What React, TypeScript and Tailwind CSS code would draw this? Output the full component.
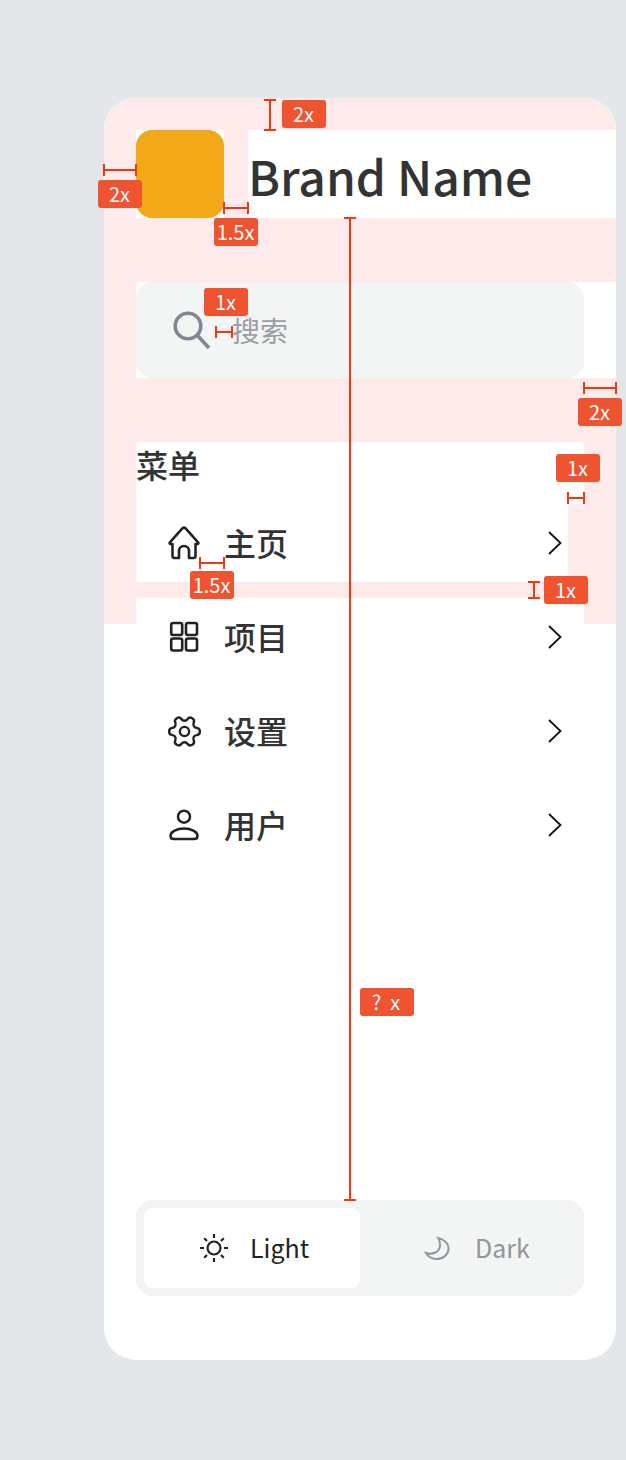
import type { ReactNode } from "react";
import { Settings } from "lucide-react";

const FONT = "font-['Noto_Sans_CJK_SC','Noto_Sans',sans-serif]";

function HomeIcon() {
  return (
    <svg width="32" height="34" viewBox="0 0 32 34" fill="none" stroke="#222" strokeWidth="2.6" strokeLinejoin="round">
      <path d="M11 32H6.500a2 2 0 0 1-2-2V18H2.600a1 1 0 0 1-.7-1.700L14.600 2.200a2 2 0 0 1 2.800 0l12.700 14.100a1 1 0 0 1-.7 1.700h-1.900v12a2 2 0 0 1-2 2H21v-7a5 5 0 0 0-10 0z" />
    </svg>
  );
}

function GridIcon() {
  return (
    <svg width="32" height="32" viewBox="0 0 32 32" fill="none" stroke="#222" strokeWidth="2.6">
      <rect x="3.200" y="2" width="11" height="12" rx="2" />
      <rect x="18" y="2" width="11" height="12" rx="2" />
      <rect x="3.200" y="17.500" width="11" height="12" rx="2" />
      <rect x="18" y="17.500" width="11" height="12" rx="2" />
    </svg>
  );
}

function UserIcon() {
  return (
    <svg width="32" height="32" viewBox="0 0 32 32" fill="none" stroke="#222" strokeWidth="2.5">
      <circle cx="16" cy="7.700" r="6" />
      <path d="M16 19.500c-7 0-13.500 3.200-13.500 7.200 0 2 1.300 3.300 3.300 3.300h20.400c2 0 3.300-1.300 3.300-3.300 0-4-6.500-7.200-13.500-7.200z" />
    </svg>
  );
}

function Chevron() {
  return (
    <svg width="14" height="24" viewBox="0 0 14 24" fill="none" stroke="#111" strokeWidth="1.8" className="shrink-0">
      <path d="M1 1l11.500 11L1 23" />
    </svg>
  );
}

function SearchIcon() {
  return (
    <svg width="40" height="40" viewBox="0 0 40 40" fill="none" stroke="#7f8791" strokeWidth="3.600">
      <circle cx="16" cy="16" r="12.800" />
      <path d="M25.500 25.500L37 38" />
    </svg>
  );
}

function SunIcon() {
  return (
    <svg width="32" height="32" viewBox="0 0 32 32" fill="none" stroke="#222" strokeWidth="2.200">
      <circle cx="16" cy="16" r="6.500" />
      <path d="M16 2v4M16 26v4M2 16h4M26 16h4M6.200 6.200l2.800 2.800M23 23l2.800 2.800M6.200 25.800L9 23M23 9l2.800-2.800" />
    </svg>
  );
}

function MoonIcon() {
  return (
    <svg width="32" height="32" viewBox="0 0 32 32" fill="none" stroke="#92959c" strokeWidth="2">
      <path d="M17.300 6C23 7.500 27.500 11.500 27.500 17C27.500 22.500 22 27 16 27C11 27 7 24.500 5 21C12 23 18.500 20 19 14C19.200 11 18.500 8 17.300 6z" />
    </svg>
  );
}

function NavItem({ icon, label, className }: { icon: ReactNode; label: string; className: string }) {
  return (
    <div className={`flex h-[78px] items-center bg-white pl-8 ${className}`}>
      <span className="flex w-8 shrink-0 items-center justify-center">{icon}</span>
      <span className="ml-6 -mt-0.5 flex-1 text-[32px] font-medium leading-none text-[#333]">{label}</span>
      <Chevron />
    </div>
  );
}

function Badge({ children, className }: { children: ReactNode; className: string }) {
  return (
    <span
      className={`absolute flex h-7 items-center justify-center rounded-[3px] bg-[#f05330] text-[20px] leading-none text-white ${className}`}
    >
      {children}
    </span>
  );
}

function Line({ className }: { className: string }) {
  return <span className={`absolute bg-[#ee3a12] ${className}`} />;
}

function HMeasure({ className }: { className: string }) {
  return (
    <span className={`absolute flex h-3 items-center justify-between border-x-2 border-[#ee3a12] ${className}`}>
      <span className="h-0.5 w-full bg-[#ee3a12]" />
    </span>
  );
}

function VMeasure({ className }: { className: string }) {
  return (
    <span className={`absolute flex w-3 justify-center border-y-2 border-[#ee3a12] ${className}`}>
      <span className="h-full w-0.5 bg-[#ee3a12]" />
    </span>
  );
}

export default function App() {
  return (
    <div className={`relative h-[1460px] w-[626px] overflow-hidden bg-[#e3e7ea] pl-[104px] pr-[10px] pt-[98px] ${FONT}`}>
      <aside className="relative flex h-[1262px] flex-col rounded-[32px] bg-white p-8 pb-16">
        {/* spacing highlight sits behind the content */}
        <div className="absolute inset-x-0 top-0 h-[526px] rounded-t-[32px] bg-[#fdebeb]" />

        <div className="relative flex flex-col">
          <header className="-mr-8 flex h-[88px] gap-6">
            <div className="size-[88px] shrink-0 bg-white">
              <div className="size-full rounded-2xl bg-[#f3a917]" />
            </div>
            <div className="flex flex-1 items-center bg-white pt-0.5 text-[48px] font-medium leading-none text-[#333]">
              Brand Name
            </div>
          </header>

          <div className="-mr-8 mt-16 bg-white pr-8">
            <div className="flex h-24 items-center rounded-2xl bg-[#f3f5f5] pl-9">
              <SearchIcon />
              <span className="ml-5 text-[28px] leading-none text-[#9a9da3]">搜索</span>
            </div>
          </div>

          <nav className="mt-16 flex flex-col">
            <h2 className="h-[62px] bg-white text-[32px] font-medium leading-[44px] text-[#333]">菜单</h2>
            <div className="flex flex-col gap-4">
              <NavItem icon={<HomeIcon />} label="主页" className="mr-4 pr-[6px]" />
              <NavItem icon={<GridIcon />} label="项目" className="pr-[22px]" />
              <NavItem
                icon={<Settings size={37} strokeWidth={1.550} color="#222" className="shrink-0 rotate-90" />}
                label="设置"
                className="pr-[22px]"
              />
              <NavItem icon={<UserIcon />} label="用户" className="pr-[22px]" />
            </div>
          </nav>
        </div>

        <div className="relative mt-auto flex h-24 rounded-2xl bg-[#f3f5f5] p-2">
          <button className="flex w-[216px] items-center gap-5 rounded-lg bg-white pl-[54px] text-[25px] text-[#222]">
            <SunIcon />
            <span>Light</span>
          </button>
          <button className="flex w-[216px] items-center gap-[22px] pl-[61px] text-[25px] text-[#92959c]">
            <MoonIcon />
            <span>Dark</span>
          </button>
        </div>
      </aside>

      {/* measurement annotations */}
      <Line className="left-[349px] top-[218px] h-[982px] w-0.5" />
      <Line className="left-[344px] top-[217px] h-0.5 w-3" />
      <Line className="left-[344px] top-[1199px] h-0.5 w-3" />
      <VMeasure className="left-[264px] top-[99px] h-8" />
      <Badge className="left-[282px] top-[100px] w-11 pr-px">2x</Badge>
      <HMeasure className="left-[103px] top-[164px] w-[34px]" />
      <Badge className="left-[98px] top-[180px] w-11 pr-px">2x</Badge>
      <HMeasure className="left-[223px] top-[202px] w-[26px]" />
      <Badge className="left-[214px] top-[218px] w-11 pr-px">1.5x</Badge>
      <Badge className="left-[204px] top-[288px] w-11 pr-px">1x</Badge>
      <HMeasure className="left-[215px] top-[326px] w-[18px]" />
      <HMeasure className="left-[583px] top-[382px] w-[34px]" />
      <Badge className="left-[578px] top-[398px] w-11 pr-px">2x</Badge>
      <Badge className="left-[556px] top-[454px] w-11 pr-px">1x</Badge>
      <HMeasure className="left-[567px] top-[492px] w-[18px]" />
      <HMeasure className="left-[199px] top-[557px] w-[26px]" />
      <Badge className="left-[190px] top-[571px] w-11 pr-px">1.5x</Badge>
      <VMeasure className="left-[528px] top-[581px] h-[18px]" />
      <Badge className="left-[544px] top-[576px] w-11 pr-px">1x</Badge>
      <Badge className="left-[360px] top-[988px] w-[54px] pr-0.5">?&nbsp; x</Badge>
    </div>
  );
}
